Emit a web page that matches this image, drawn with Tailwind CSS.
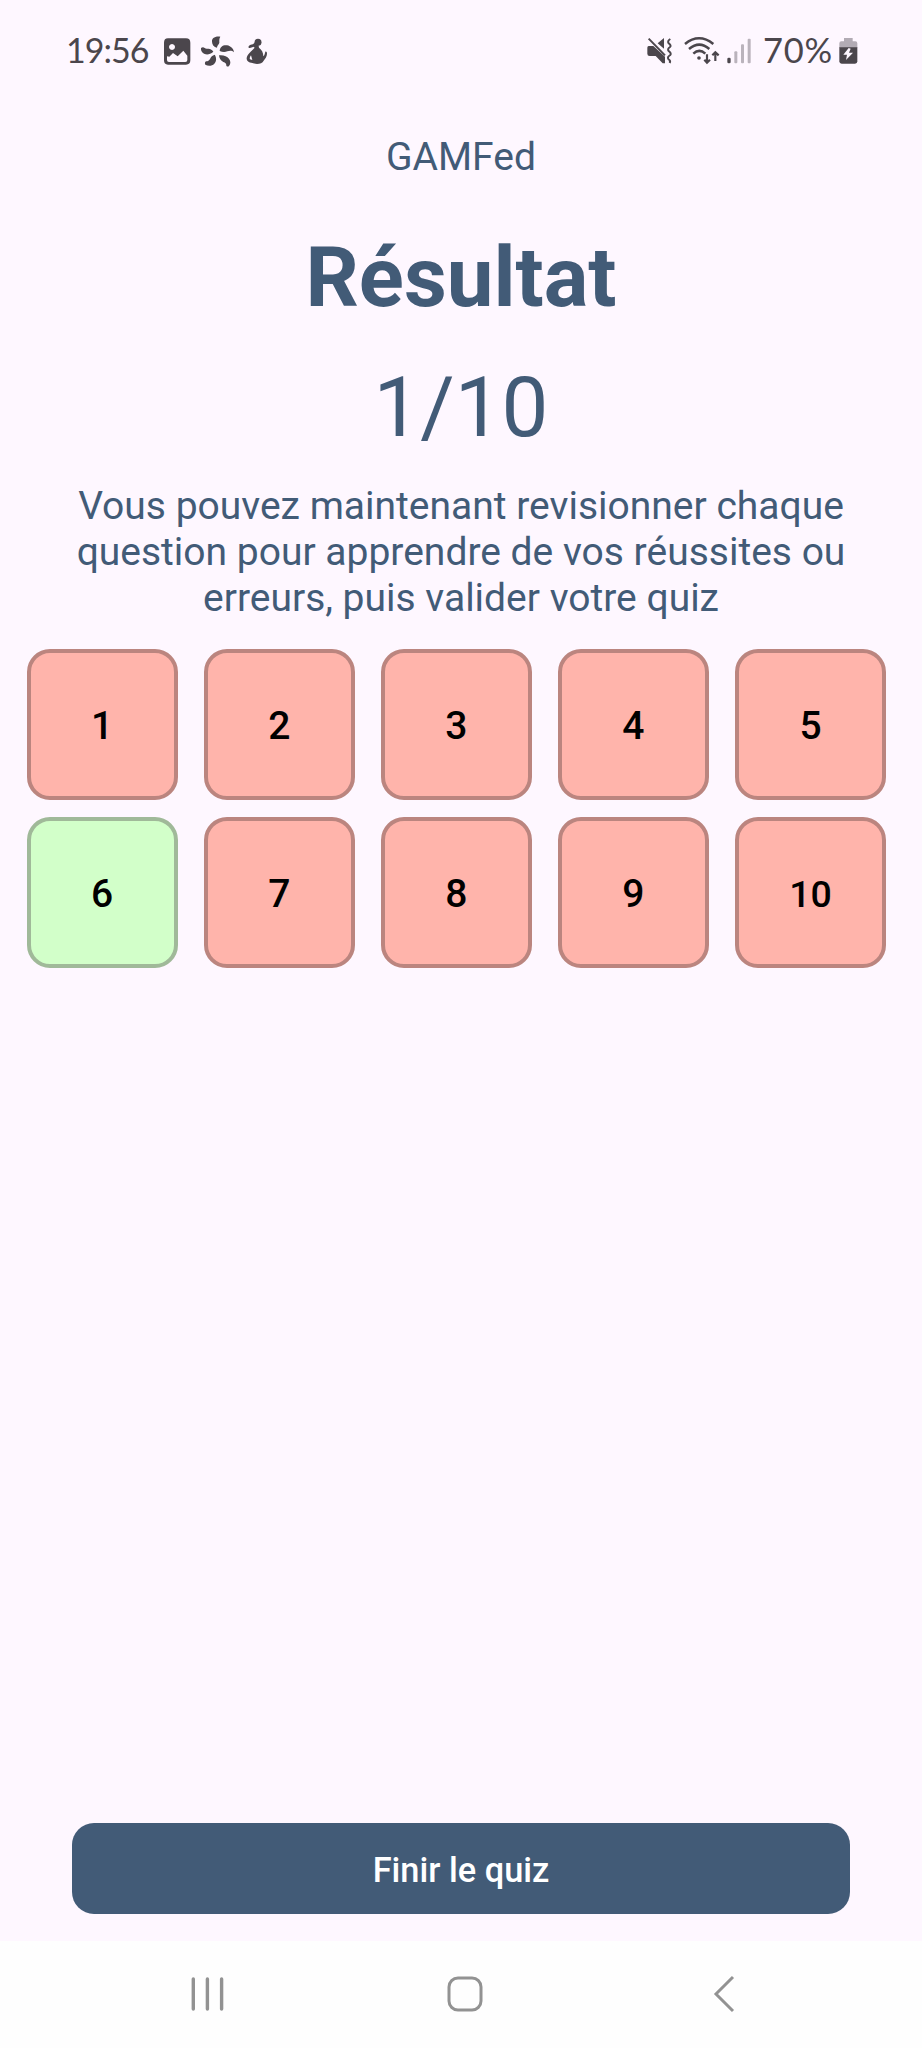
<!DOCTYPE html>
<html lang="fr">
<head>
<meta charset="utf-8">
<meta name="viewport" content="width=device-width">
<title>GAMFed</title>
<script src="https://cdn.jsdelivr.net/npm/@tailwindcss/browser@4"></script>
</head>
<body class="bg-[#fef7ff]">
<div class="flex h-[2048px] w-[922px] flex-col overflow-hidden bg-[#fef7ff] font-['Roboto',sans-serif] text-[#425b77]">
  <!-- Status bar -->
  <header class="flex h-[100px] shrink-0 items-center justify-between pr-[62px] pl-[66px] font-['Lato',sans-serif] text-[34px] leading-[60px] text-[#4b464c]">
    <div class="flex h-[60px] items-center">
      <span class="w-[96px] whitespace-nowrap tracking-[-1px]">19:56</span>
      <svg class="h-[60px] w-[30px]" viewBox="336 0 90 180" fill="currentColor"><path fill-rule="evenodd" d="M354 55h54q13 0 13 13v53q0 13-13 13h-54q-12 0-12-13V68q0-13 12-13zM366 72a9 9 0 1 0 .1 0zM351 109v11q0 6 6 6h49q6 0 6-6v-13l-12-15-17 17-14-10-11 11z"/></svg>
      <svg class="ml-[8px] h-[60px] w-[36px]" viewBox="450 0 108 180" fill="currentColor"><path d="M511 50c-18-2-26 6-25 15 0 9 6 16 15 18 0-8 6-9 7-15 0-6-1-12 3-18zM509 93c1-13 11-19 22-17 12 2 20 11 21 21-7-7-14-5-20-3-8 3-15 2-23-1zM507 106c13-2 24 3 30 10 6 8 5 16 0 22-3 3-6 2-8-1 0-7-3-9-9-11-8-4-12-10-13-20zM494 104c6 8 6 20-1 27-7 7-18 8-27 3-2-4-2-7 2-10 6 0 9-3 12-7 3-7 7-11 14-13zM490 95c-9 8-18 10-26 7-8-3-12-10-11-18 4-3 8-3 11 0 3 3 7 2 11 2 7 0 12 4 15 9z"/></svg>
      <svg class="ml-[8px] h-[60px] w-[26px]" viewBox="583 0 78 180" fill="currentColor"><circle cx="625" cy="67" r="10.500"/><path fill-rule="evenodd" d="M615 68c-3 4-8 5-12 6-5 2-8 6-6 9 5 2 9-1 14-3l4 3c-8 8-15 14-21 23-4 7-4 12-1 16 4 6 11 5 15 7 13 5 29 3 34-7 4-6 10-12 10-21 0-5-2-7-5-6-2 6-2 11-6 14 0-12-5-20-13-26l-2-11zM604 106l4 14-7-2c-2-4 0-8 3-12z"/></svg>
    </div>
    <div class="flex h-[60px] items-center">
      <svg class="h-[60px] w-[28px]" viewBox="48 0 84 180" fill="currentColor"><path d="M83 70l19-16v32zM53 78h17l35 32v20h-7l-21-22H59q-7 0-7-7V83q0-5 4-5z"/><path d="M56 56l49 50M121 57q-10 6-5 13 9 7 4 11-9 6-4 12 9 7 5 12-10 6-6 12 8 5 4 12" fill="none" stroke="currentColor" stroke-width="6"/></svg>
      <svg class="ml-[10px] h-[60px] w-[37px]" viewBox="162 0 111 180" fill="none" stroke="currentColor" stroke-width="7.500"><path d="M165 72q42-34 85 0M177 87q31-26 61 0M190 101q18-17 36 0"/><path stroke-width="6.500" d="M231 103v25M223 119l8 9 9-9M256 123V98M247 106l9-9 10 9"/><circle cx="207" cy="114" r="5.500" fill="currentColor" stroke="none"/></svg>
      <svg class="ml-[6px] h-[60px] w-[25px]" viewBox="291 0 75 180"><rect x="292" y="113" width="10" height="17" rx="4" fill="#4b464c"/><g fill="#bab3bc"><rect x="313" y="94" width="9" height="36" rx="3"/><rect x="333" y="73" width="9" height="57" rx="3"/><rect x="353" y="56" width="9" height="74" rx="3"/></g></svg>
      <span class="ml-[11px] w-[75px] whitespace-nowrap text-[34.500px] tracking-[0.8px]">70%</span>
      <svg class="h-[60px] w-[22px]" viewBox="623 0 66 180"><path fill="#b2abb4" d="M641 54h26v10h8q6 0 6 6v14h-54V70q0-6 6-6h8z"/><path fill="#4b464c" d="M627 82h54v42q0 7-7 7h-40q-7 0-7-7z"/><path fill="#fef7ff" d="M655 84l-16 20h11l-3 16 21-22h-12l5-12z"/></svg>
    </div>
  </header>

  <!-- Result -->
  <main class="flex flex-1 flex-col items-center text-center">
    <p class="mt-[34px] text-[39px] leading-[46px]">GAMFed</p>
    <h1 class="mt-[49px] text-[83.400px] leading-[98px] font-bold">Résultat</h1>
    <p class="mt-[32px] text-[83.400px] leading-[98px]">1/10</p>
    <p class="mt-[26px] text-[39px] leading-[46px] whitespace-nowrap">Vous pouvez maintenant revisionner chaque<br>question pour apprendre de vos réussites ou<br>erreurs, puis valider votre quiz</p>
    <div class="mt-[27.600px] grid w-full grid-cols-5 gap-x-[26.200px] gap-y-[17.200px] pr-[36px] pl-[26.700px] text-[39px] font-medium text-black *:flex *:h-[151px] *:items-center *:justify-center *:rounded-[23px] *:border-4 *:border-[#bb857f] *:bg-[#ffb4ab] *:pt-[4px]">
      <div>1</div><div>2</div><div>3</div><div>4</div><div>5</div>
      <div class="border-[#a0b999]! bg-[#d2ffc9]!">6</div><div>7</div><div>8</div><div>9</div><div class="text-[37.500px]">10</div>
    </div>
    <button class="mt-auto mb-[27px] h-[91px] w-[778px] rounded-[22px] bg-[#425b77] pt-[5px] text-[34.400px] font-medium text-white">Finir le quiz</button>
  </main>

  <!-- System navigation -->
  <nav class="flex h-[107px] shrink-0 items-center justify-between bg-[#fefefe] pr-[179px] pb-[2px] pl-[187px] text-[#929292]">
    <svg class="h-10 w-10" viewBox="0 0 40 40" fill="none" stroke="currentColor" stroke-width="3.400" stroke-linecap="round"><path d="M6.300 5v30M20.400 5v30M34.600 5v30"/></svg>
    <svg class="h-10 w-10" viewBox="0 0 40 40" fill="none" stroke="currentColor" stroke-width="3"><rect x="4" y="4" width="32" height="32" rx="9"/></svg>
    <svg class="h-10 w-10" viewBox="0 0 40 40" fill="none" stroke="currentColor" stroke-width="3"><path d="M30 3L13 20l17 17"/></svg>
  </nav>
</div>
</body>
</html>
